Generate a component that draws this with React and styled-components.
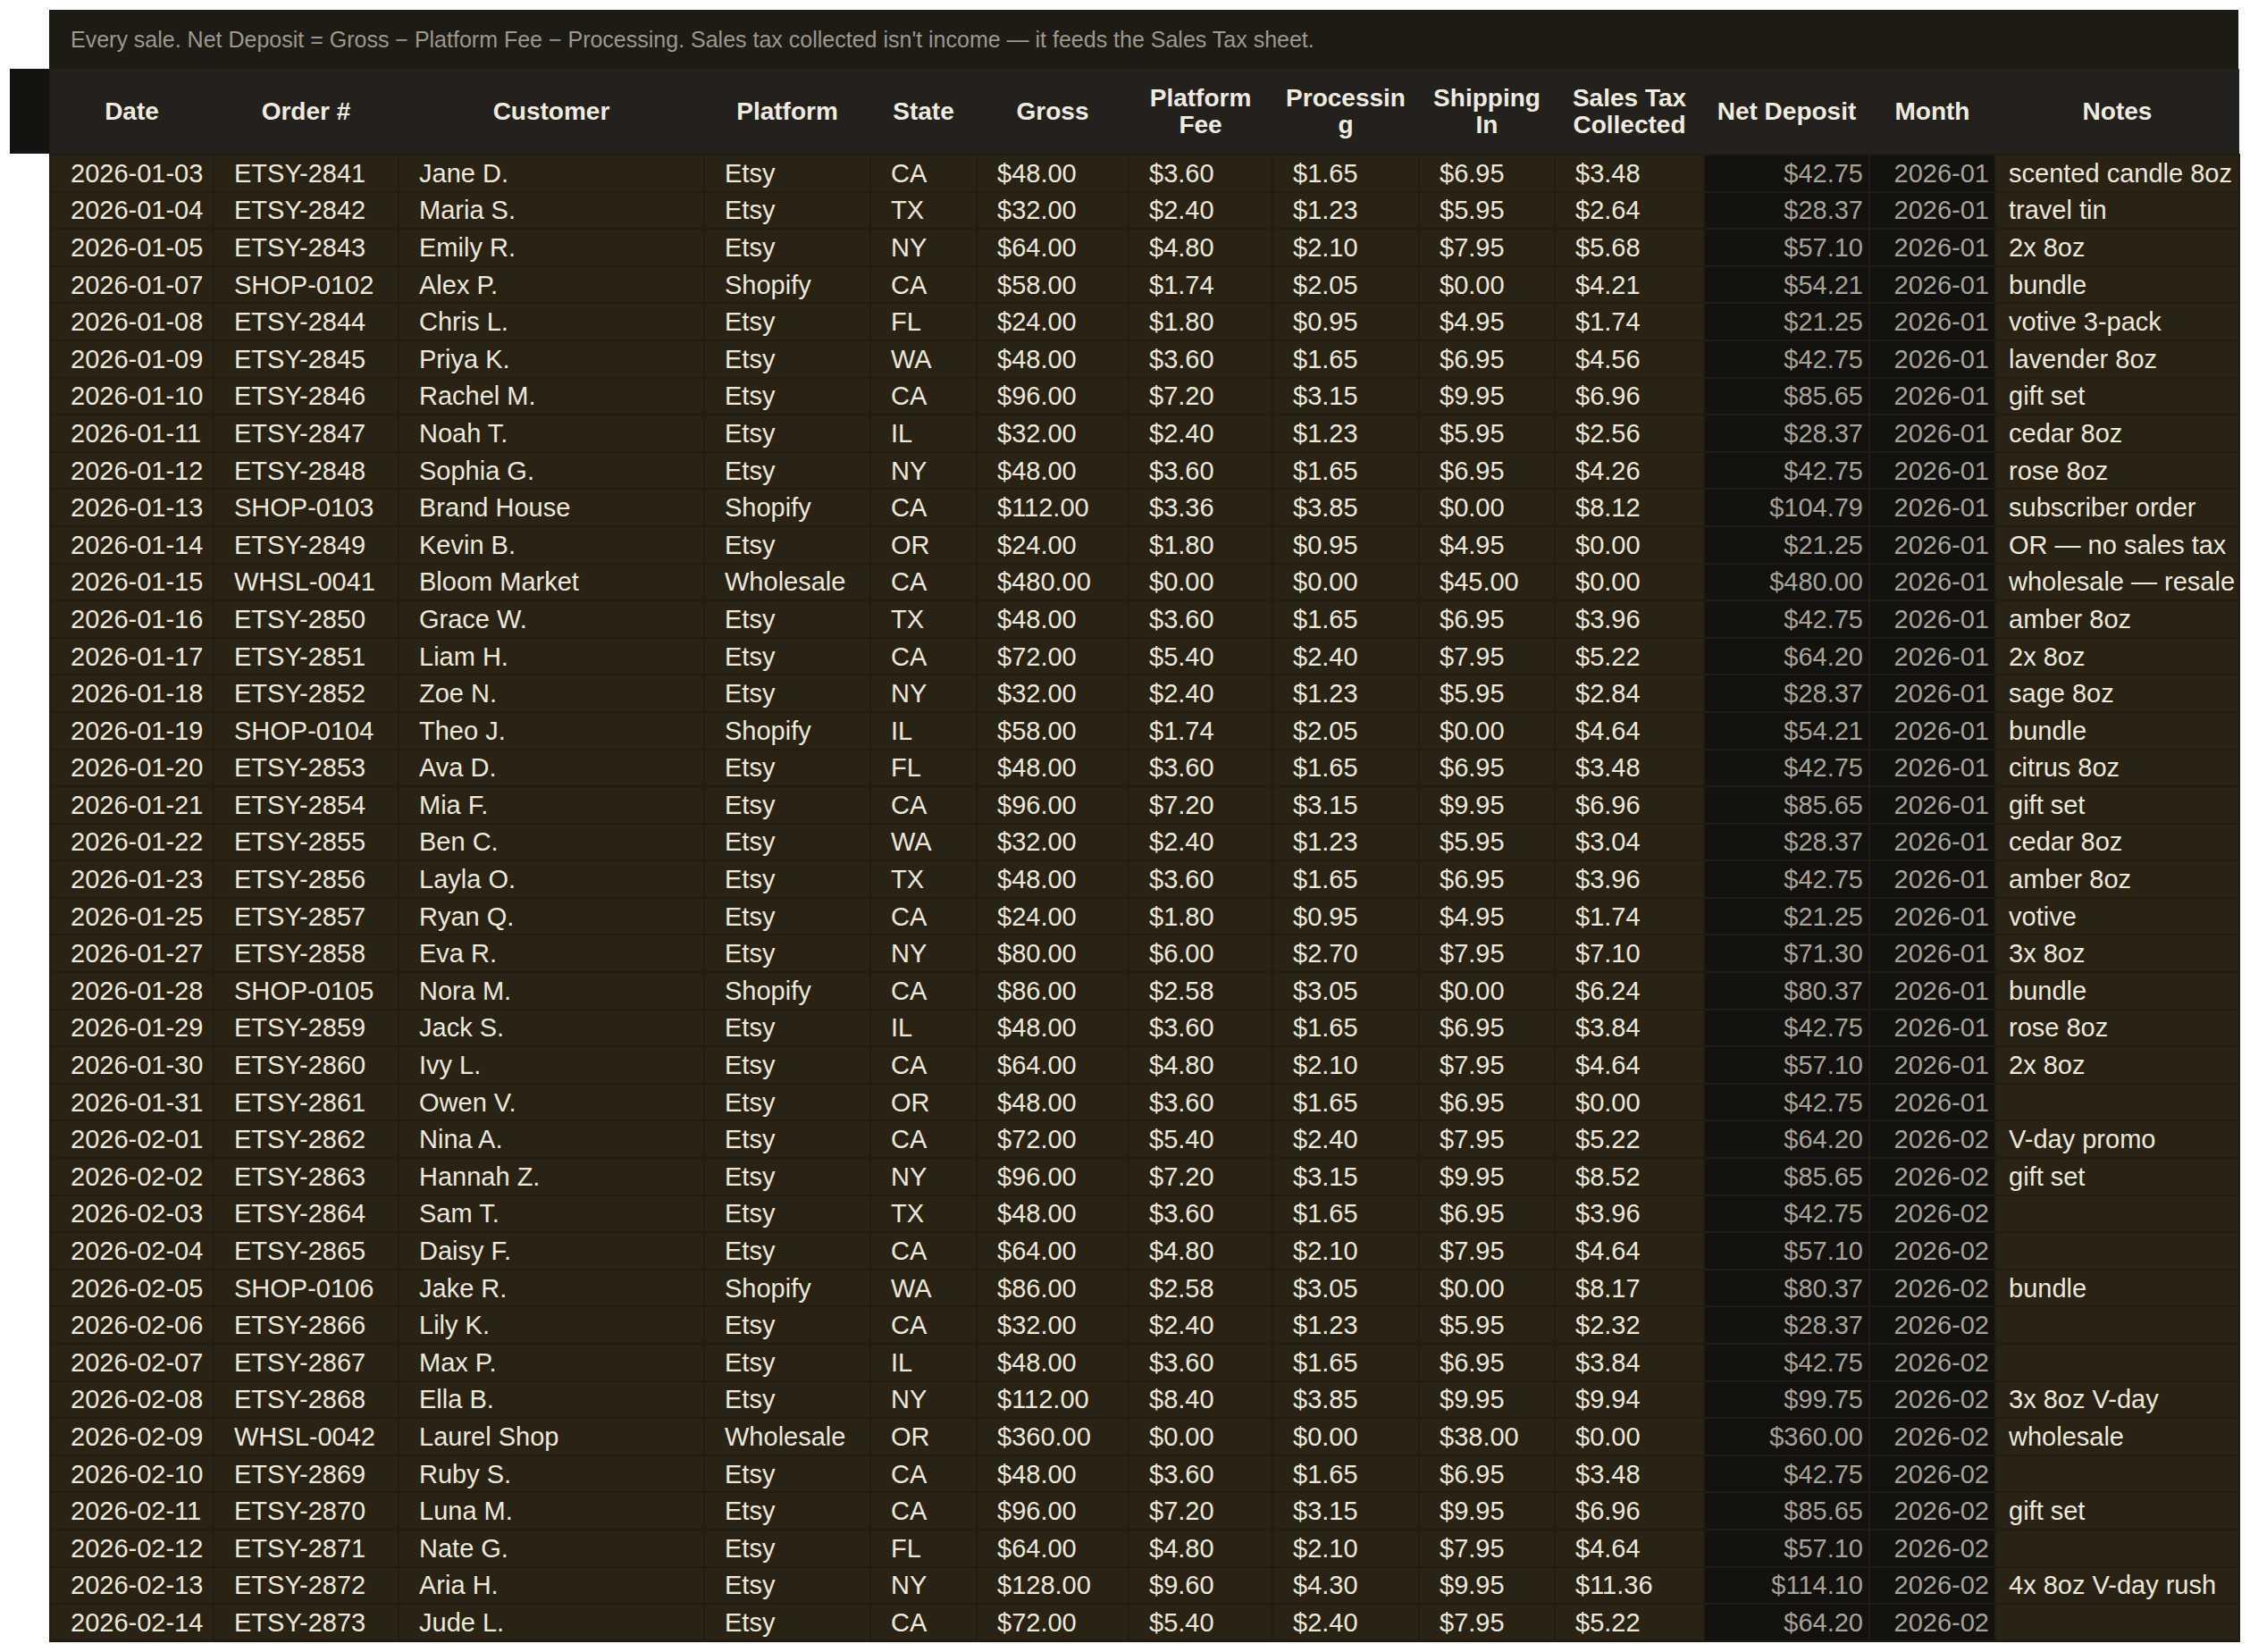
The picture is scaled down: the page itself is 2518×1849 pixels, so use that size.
import React from 'react';
import styled, {createGlobalStyle} from 'styled-components';

const GlobalStyle = createGlobalStyle`
  body { margin: 0; background: #ffffff; font-family: "Liberation Sans", Arial, sans-serif; }
`;

const raw = `2026-01-03|ETSY-2841|Jane D.|Etsy|CA|48.00|3.60|1.65|6.95|3.48|42.75|scented candle 8oz
2026-01-04|ETSY-2842|Maria S.|Etsy|TX|32.00|2.40|1.23|5.95|2.64|28.37|travel tin
2026-01-05|ETSY-2843|Emily R.|Etsy|NY|64.00|4.80|2.10|7.95|5.68|57.10|2x 8oz
2026-01-07|SHOP-0102|Alex P.|Shopify|CA|58.00|1.74|2.05|0.00|4.21|54.21|bundle
2026-01-08|ETSY-2844|Chris L.|Etsy|FL|24.00|1.80|0.95|4.95|1.74|21.25|votive 3-pack
2026-01-09|ETSY-2845|Priya K.|Etsy|WA|48.00|3.60|1.65|6.95|4.56|42.75|lavender 8oz
2026-01-10|ETSY-2846|Rachel M.|Etsy|CA|96.00|7.20|3.15|9.95|6.96|85.65|gift set
2026-01-11|ETSY-2847|Noah T.|Etsy|IL|32.00|2.40|1.23|5.95|2.56|28.37|cedar 8oz
2026-01-12|ETSY-2848|Sophia G.|Etsy|NY|48.00|3.60|1.65|6.95|4.26|42.75|rose 8oz
2026-01-13|SHOP-0103|Brand House|Shopify|CA|112.00|3.36|3.85|0.00|8.12|104.79|subscriber order
2026-01-14|ETSY-2849|Kevin B.|Etsy|OR|24.00|1.80|0.95|4.95|0.00|21.25|OR — no sales tax
2026-01-15|WHSL-0041|Bloom Market|Wholesale|CA|480.00|0.00|0.00|45.00|0.00|480.00|wholesale — resale cert
2026-01-16|ETSY-2850|Grace W.|Etsy|TX|48.00|3.60|1.65|6.95|3.96|42.75|amber 8oz
2026-01-17|ETSY-2851|Liam H.|Etsy|CA|72.00|5.40|2.40|7.95|5.22|64.20|2x 8oz
2026-01-18|ETSY-2852|Zoe N.|Etsy|NY|32.00|2.40|1.23|5.95|2.84|28.37|sage 8oz
2026-01-19|SHOP-0104|Theo J.|Shopify|IL|58.00|1.74|2.05|0.00|4.64|54.21|bundle
2026-01-20|ETSY-2853|Ava D.|Etsy|FL|48.00|3.60|1.65|6.95|3.48|42.75|citrus 8oz
2026-01-21|ETSY-2854|Mia F.|Etsy|CA|96.00|7.20|3.15|9.95|6.96|85.65|gift set
2026-01-22|ETSY-2855|Ben C.|Etsy|WA|32.00|2.40|1.23|5.95|3.04|28.37|cedar 8oz
2026-01-23|ETSY-2856|Layla O.|Etsy|TX|48.00|3.60|1.65|6.95|3.96|42.75|amber 8oz
2026-01-25|ETSY-2857|Ryan Q.|Etsy|CA|24.00|1.80|0.95|4.95|1.74|21.25|votive
2026-01-27|ETSY-2858|Eva R.|Etsy|NY|80.00|6.00|2.70|7.95|7.10|71.30|3x 8oz
2026-01-28|SHOP-0105|Nora M.|Shopify|CA|86.00|2.58|3.05|0.00|6.24|80.37|bundle
2026-01-29|ETSY-2859|Jack S.|Etsy|IL|48.00|3.60|1.65|6.95|3.84|42.75|rose 8oz
2026-01-30|ETSY-2860|Ivy L.|Etsy|CA|64.00|4.80|2.10|7.95|4.64|57.10|2x 8oz
2026-01-31|ETSY-2861|Owen V.|Etsy|OR|48.00|3.60|1.65|6.95|0.00|42.75|
2026-02-01|ETSY-2862|Nina A.|Etsy|CA|72.00|5.40|2.40|7.95|5.22|64.20|V-day promo
2026-02-02|ETSY-2863|Hannah Z.|Etsy|NY|96.00|7.20|3.15|9.95|8.52|85.65|gift set
2026-02-03|ETSY-2864|Sam T.|Etsy|TX|48.00|3.60|1.65|6.95|3.96|42.75|
2026-02-04|ETSY-2865|Daisy F.|Etsy|CA|64.00|4.80|2.10|7.95|4.64|57.10|
2026-02-05|SHOP-0106|Jake R.|Shopify|WA|86.00|2.58|3.05|0.00|8.17|80.37|bundle
2026-02-06|ETSY-2866|Lily K.|Etsy|CA|32.00|2.40|1.23|5.95|2.32|28.37|
2026-02-07|ETSY-2867|Max P.|Etsy|IL|48.00|3.60|1.65|6.95|3.84|42.75|
2026-02-08|ETSY-2868|Ella B.|Etsy|NY|112.00|8.40|3.85|9.95|9.94|99.75|3x 8oz V-day
2026-02-09|WHSL-0042|Laurel Shop|Wholesale|OR|360.00|0.00|0.00|38.00|0.00|360.00|wholesale
2026-02-10|ETSY-2869|Ruby S.|Etsy|CA|48.00|3.60|1.65|6.95|3.48|42.75|
2026-02-11|ETSY-2870|Luna M.|Etsy|CA|96.00|7.20|3.15|9.95|6.96|85.65|gift set
2026-02-12|ETSY-2871|Nate G.|Etsy|FL|64.00|4.80|2.10|7.95|4.64|57.10|
2026-02-13|ETSY-2872|Aria H.|Etsy|NY|128.00|9.60|4.30|9.95|11.36|114.10|4x 8oz V-day rush
2026-02-14|ETSY-2873|Jude L.|Etsy|CA|72.00|5.40|2.40|7.95|5.22|64.20|`;

const rows = raw.split('\n').map(l => l.split('|'));

const headers = ['Date', 'Order #', 'Customer', 'Platform', 'State', 'Gross', 'Platform Fee', 'Processing', 'Shipping In', 'Sales Tax Collected', 'Net Deposit', 'Month', 'Notes'];
const widths = [183, 207, 342, 186, 119, 170, 161, 164, 152, 167, 185, 141, 273];

const Page = styled.div`
  display: flex;
  padding: 11px 13px 0 11px;
`;

const Tab = styled.div`
  width: 44px;
  height: 95px;
  margin-top: 66px;
  background: #14130f;
  flex-shrink: 0;
`;

const Sheet = styled.div`
  width: 2450px;
  background: #1e1b15;
`;

const Note = styled.div`
  height: 66px;
  display: flex;
  align-items: center;
  padding-left: 24px;
  color: #9c988e;
  font-size: 25px;
`;

const Table = styled.table`
  table-layout: fixed;
  width: 2450px;
  border-collapse: collapse;
  font-size: 29px;
`;

const Th = styled.th`
  height: 95px;
  background: #24211c;
  color: #efebe0;
  font-weight: bold;
  font-size: 28px;
  line-height: 30px;
  padding: 0 12px;
  text-align: center;
  overflow-wrap: anywhere;
`;

const Tr = styled.tr`
  height: 41.6px;
  background: #2a2314;
`;

const Td = styled.td`
  color: ${p => (p.$dim ? '#a7a397' : '#ece8dc')};
  background: ${p => (p.$dim ? '#13120f' : 'transparent')};
  text-align: ${p => (p.$right ? 'right' : 'left')};
  padding: 0 ${p => (p.$right ? '6px' : '0')} 0 ${p => (p.$right ? '0' : '22px')};
  border: 2px solid #221d12;
  line-height: 36px;
  white-space: nowrap;
  overflow: hidden;
`;

const NoteTd = styled(Td)`
  padding-left: 14px;
`;

export default function App() {
  return (
    <>
      <GlobalStyle />
      <Page>
        <Tab />
        <Sheet>
          <Note>Every sale. Net Deposit = Gross − Platform Fee − Processing. Sales tax collected isn't income — it feeds the Sales Tax sheet.</Note>
          <Table>
            <colgroup>
              {widths.map((w, i) => <col key={i} style={{width: w}} />)}
            </colgroup>
            <thead>
              <tr>{headers.map(h => <Th key={h}>{h}</Th>)}</tr>
            </thead>
            <tbody>
              {rows.map(r => (
                <Tr key={r[1]}>
                  <Td>{r[0]}</Td>
                  <Td>{r[1]}</Td>
                  <Td>{r[2]}</Td>
                  <Td>{r[3]}</Td>
                  <Td>{r[4]}</Td>
                  {r.slice(5, 10).map((v, i) => <Td key={i}>${v}</Td>)}
                  <Td $dim $right>${r[10]}</Td>
                  <Td $dim $right>{r[0].slice(0, 7)}</Td>
                  <NoteTd>{r[11]}</NoteTd>
                </Tr>
              ))}
            </tbody>
          </Table>
        </Sheet>
      </Page>
    </>
  );
}
